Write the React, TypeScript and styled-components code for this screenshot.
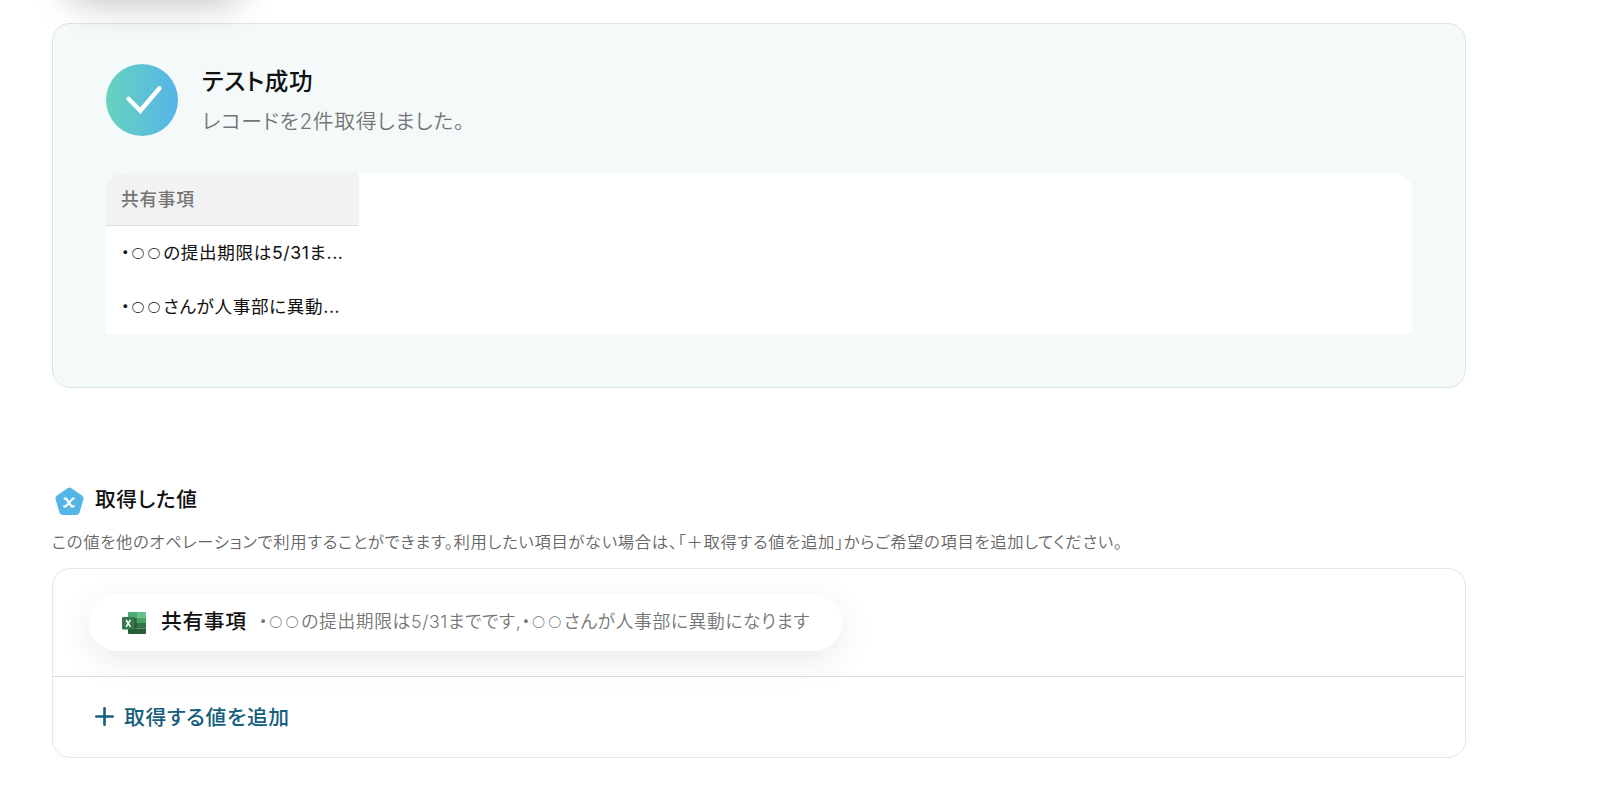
import React from 'react';
import styled, { createGlobalStyle } from 'styled-components';

const GlobalStyle = createGlobalStyle`
  * {
    box-sizing: border-box;
  }

  body {
    margin: 0;
    background: #ffffff;
    color: #111111;
    font-family: Inter, 'Noto Sans CJK JP', sans-serif;
    font-feature-settings: 'palt';
    font-weight: 350;
    letter-spacing: 0.64px;
    overflow: hidden;
  }
`;

const Page = styled.main`
  width: 1466px;
  height: 812px;
  padding: 23px 0 0 52px;
`;

const FloatingButton = styled.div`
  position: absolute;
  top: -60px;
  left: 66px;
  width: 178px;
  height: 54px;
  border-radius: 27px;
  background: #ffffff;
  box-shadow: 0 9px 36px rgba(0, 20, 30, 0.27);
  pointer-events: none;
`;

const ResultCard = styled.section`
  height: 365px;
  padding: 40px 53px 0;
  border: 1px solid #e0e3e4;
  border-radius: 18px;
  background: #f4fafa;
`;

const ResultHeader = styled.div`
  display: flex;
  gap: 24px;
  height: 72px;
  margin-bottom: 37px;
`;

const ResultTitle = styled.h2`
  margin: 1px 0 0;
  font-size: 23.6px;
  font-weight: 500;
  line-height: 34px;
`;

const ResultMessage = styled.p`
  margin: 6px 0 0;
  color: #757575;
  font-size: 20.8px;
  line-height: 34px;
`;

const TableWrapper = styled.div`
  height: 161px;
  border-radius: 18px 18px 0 0;
  background: #ffffff;
  overflow: hidden;
`;

const Column = styled.div`
  width: 253px;
`;

const HeaderCell = styled.div`
  height: 53px;
  padding: 0 15px;
  border-bottom: 1px solid #dfdfdf;
  background: #f2f2f2;
  color: #757575;
  font-size: 17.8px;
  font-weight: 500;
  line-height: 53px;
`;

const Cell = styled.div`
  height: 54px;
  padding: 0 15px;
  font-size: 17.6px;
  font-weight: 400;
  line-height: 54px;
  white-space: nowrap;
`;

const Circles = styled.span`
  margin-left: 0.6px;
  font-size: 0.87em;
  font-weight: 230;
  letter-spacing: 2.1px;
`;

const SectionHeader = styled.div`
  display: flex;
  align-items: center;
  gap: 11px;
  height: 36px;
  margin-top: 95px;
  padding-left: 3px;
`;

const SectionTitle = styled.h2`
  margin: 0 0 2px;
  font-size: 20.7px;
  font-weight: 500;
  line-height: 32px;
`;

const Description = styled.p`
  margin: 8px 0 0;
  color: #666666;
  font-size: 16.36px;
  line-height: 30px;
  white-space: nowrap;
`;

const ValueCard = styled.section`
  height: 190px;
  margin-top: 11px;
  border: 1px solid #e6e6e6;
  border-radius: 18px;
  overflow: hidden;
`;

const ValueRow = styled.div`
  height: 108px;
  padding: 25px 36px;
  border-bottom: 1px solid #dfdfdf;
`;

const ValuePill = styled.div`
  display: flex;
  align-items: center;
  width: 753px;
  height: 57px;
  padding: 0 20px 0 33px;
  border-radius: 29px;
  background: #ffffff;
  box-shadow: 0 9px 36px rgba(0, 0, 0, 0.085);
  line-height: 24px;
  white-space: nowrap;

  svg {
    flex-shrink: 0;
  }
`;

const ValueName = styled.span`
  margin: 0 0 1px 15px;
  font-size: 20.8px;
  font-weight: 500;
`;

const ValueText = styled.span`
  margin: 0 0 0 12px;
  color: #757575;
  font-size: 17.75px;
`;

const AddButton = styled.button`
  display: flex;
  align-items: center;
  gap: 10px;
  height: 79px;
  padding: 0 0 0 42px;
  border: 0;
  background: none;
  color: #165e7d;
  font: inherit;
  font-size: 20.8px;
  font-weight: 500;
  letter-spacing: inherit;
`;

const AddLabel = styled.span`
  margin-bottom: 2px;
`;

const SuccessIcon = () => (
  <svg width="72" height="72" viewBox="0 0 72 72" fill="none">
    <defs>
      <linearGradient id="success" x1="0" y1="0" x2="1" y2="0">
        <stop stopColor="#67d3bd" />
        <stop offset="1" stopColor="#55b5e8" />
      </linearGradient>
    </defs>
    <circle cx="36" cy="36" r="36" fill="url(#success)" />
    <path
      d="M22.5 34.8L34.3 46.8L53.5 24.3"
      stroke="#ffffff"
      strokeWidth="4.4"
      strokeLinecap="round"
    />
  </svg>
);

const VariableIcon = () => (
  <svg width="29" height="29" viewBox="0 0 29 29" fill="none">
    <path
      d="M12.6 1.2Q14.5 0 16.4 1.2L27 8.5Q29 10 28.4 12.2L24.4 26Q23.6 28 21.2 28H7.8Q5.4 28 4.6 26L0.6 12.2Q0 10 2 8.5Z"
      fill="#55b6e6"
    />
    <path
      d="M9.6 11.6H11.2L16.5 19.4H18.6M18.6 11.6H17.8L10.8 19.4H9.2"
      stroke="#ffffff"
      strokeWidth="2.1"
      strokeLinecap="round"
      strokeLinejoin="round"
    />
  </svg>
);

const ExcelIcon = () => (
  <svg width="24" height="22" viewBox="0 0 24 22" fill="none">
    <path d="M7 0H15V5.5H6V1Q6 0 7 0Z" fill="#4caa72" />
    <path d="M15 0H23Q24 0 24 1V5.5H15Z" fill="#5fc287" />
    <path d="M6 5.5H15V11H6Z" fill="#327549" />
    <path d="M15 5.5H24V11H15Z" fill="#48a166" />
    <path d="M6 11H15V16.5H6Z" fill="#295c38" />
    <path d="M15 11H24V16.5H15Z" fill="#327549" />
    <path d="M6 16.5H24V21Q24 22 23 22H7Q6 22 6 21Z" fill="#295c38" />
    <path d="M6 5H12Q13.5 5 13.5 6.5V17Q13.5 18.5 12 18.5H6Z" fill="#245c38" opacity="0.7" />
    <rect y="5" width="12.5" height="12.5" rx="1" fill="#35794c" />
    <path d="M4.1 8L8.4 14.8M8.4 8L4.1 14.8" stroke="#ffffff" strokeWidth="1.5" />
  </svg>
);

const PlusIcon = () => (
  <svg width="19" height="19" viewBox="0 0 19 19" fill="none">
    <path
      d="M9.5 1.3V17.7M1.3 9.5H17.7"
      stroke="currentColor"
      strokeWidth="2.6"
      strokeLinecap="round"
    />
  </svg>
);

const rows = ['の提出期限は5/31ま...', 'さんが人事部に異動...'];

const App = () => {
  return (
    <>
      <GlobalStyle />
      <Page>
        <ResultCard>
          <ResultHeader>
            <SuccessIcon />
            <div>
              <ResultTitle>テスト成功</ResultTitle>
              <ResultMessage>レコードを2件取得しました。</ResultMessage>
            </div>
          </ResultHeader>
          <TableWrapper>
            <Column>
              <HeaderCell>共有事項</HeaderCell>
              {rows.map((row) => (
                <Cell key={row}>
                  ・<Circles>○○</Circles>
                  {row}
                </Cell>
              ))}
            </Column>
          </TableWrapper>
        </ResultCard>

        <SectionHeader>
          <VariableIcon />
          <SectionTitle>取得した値</SectionTitle>
        </SectionHeader>
        <Description>
          この値を他のオペレーションで利用することができます。利用したい項目がない場合は、「＋取得する値を追加」からご希望の項目を追加してください。
        </Description>

        <ValueCard>
          <ValueRow>
            <ValuePill>
              <ExcelIcon />
              <ValueName>共有事項</ValueName>
              <ValueText>
                ・<Circles>○○</Circles>の提出期限は5/31までです,・
                <Circles>○○</Circles>さんが人事部に異動になります
              </ValueText>
            </ValuePill>
          </ValueRow>
          <AddButton>
            <PlusIcon />
            <AddLabel>取得する値を追加</AddLabel>
          </AddButton>
        </ValueCard>
      </Page>
      <FloatingButton />
    </>
  );
};

export default App;
